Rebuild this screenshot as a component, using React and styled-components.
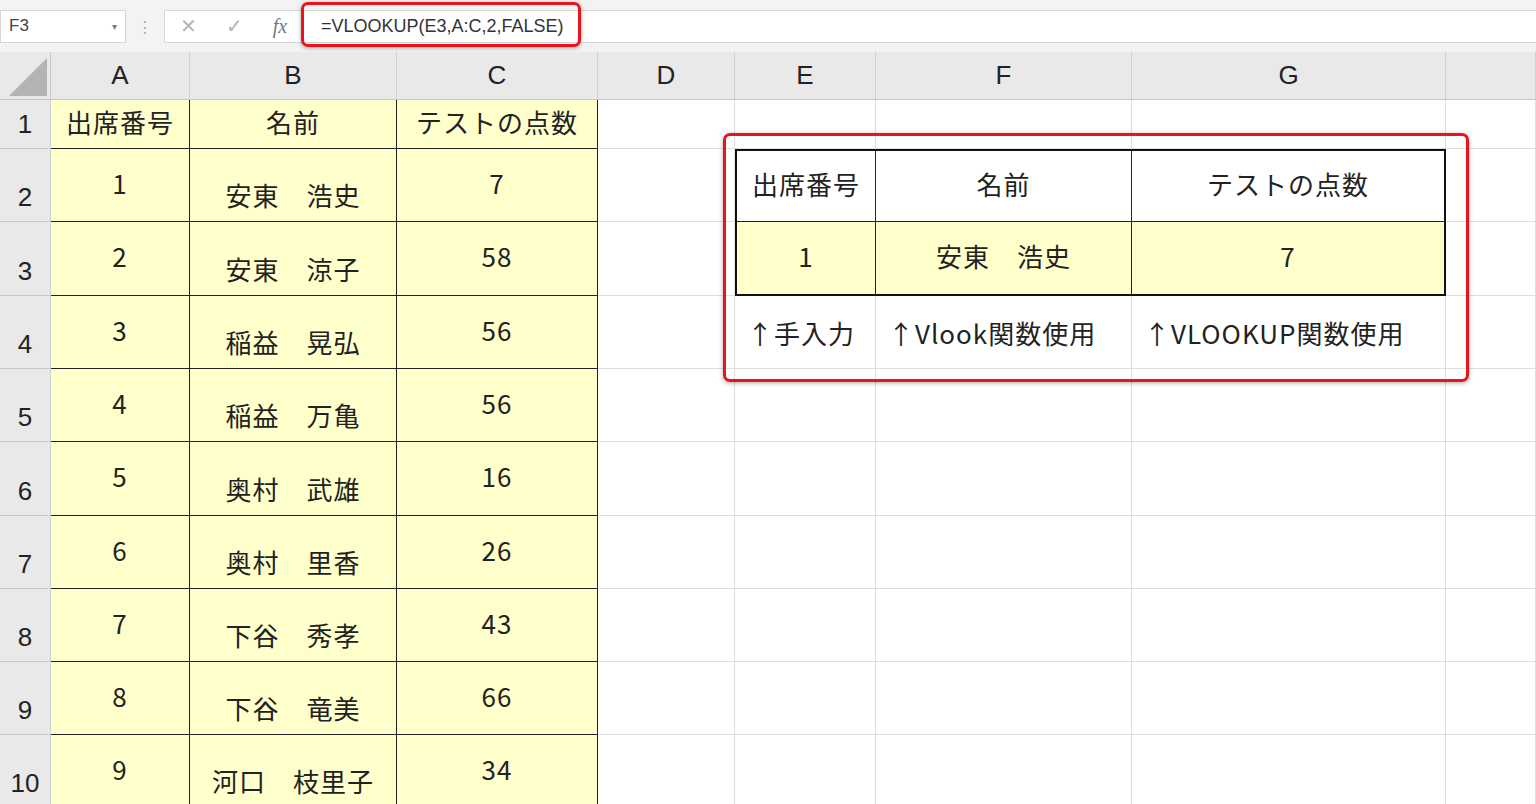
import React from "react";
import styled, { createGlobalStyle } from "styled-components";

const G = createGlobalStyle`
  body{margin:0;background:#fff;font-family:"Noto Sans CJK JP","Noto Sans",sans-serif;overflow:hidden;}
`;
const Page = styled.div`width:1536px;height:804px;position:relative;overflow:hidden;`;
const Bar = styled.div`height:52px;background:#f3f3f3;display:flex;align-items:center;gap:0;padding-top:0;box-sizing:border-box;`;
const NameBox = styled.div`width:126px;height:33px;margin-left:0;background:#fff;border:1px solid #d6d6d6;box-sizing:border-box;display:flex;align-items:center;justify-content:space-between;padding:0 8px;font:17px "Liberation Sans",sans-serif;color:#444;`;
const Dots = styled.div`width:38px;text-align:center;color:#aaa;font-size:16px;`;
const Formula = styled.div`flex:1;height:33px;background:#fff;border:1px solid #d6d6d6;border-right:none;display:flex;align-items:center;box-sizing:border-box;`;
const Btn = styled.div`width:46px;text-align:center;color:#b5b5b5;font:20px "Liberation Sans",sans-serif;`;
const Fx = styled.div`width:46px;text-align:center;color:#777;font:italic 20px "Liberation Serif",serif;`;
const FText = styled.div`padding-left:18px;font:18px "Liberation Sans",sans-serif;color:#333;`;
const Grid = styled.div`display:grid;grid-template-columns:51px 139px 207px 201px 137px 141px 256px 314px 90px;grid-template-rows:48px 49px 73px 74px 73px 73px 74px 73px 73px 73px 73px;`;
const Head = styled.div`background:#e9e9e9;border-right:1px solid #d0d0d0;border-bottom:1px solid #c8c8c8;display:flex;align-items:center;justify-content:center;font:26px "Liberation Sans",sans-serif;color:#222;`;
const RowHead = styled(Head)`align-items:${p=>p.$top?"center":"flex-end"};padding-bottom:${p=>p.$top?0:8}px;box-sizing:border-box;`;
const Corner = styled.div`background:#e9e9e9;border-right:1px solid #c8c8c8;border-bottom:1px solid #c8c8c8;position:relative;overflow:hidden;
  &::after{content:"";position:absolute;right:3px;bottom:3px;border-left:38px solid transparent;border-bottom:38px solid #b4b4b4;}`;
const Cell = styled.div`
  background:${p=>p.$y?"#ffffcc":"#fff"};
  border-right:${p=>p.$br||"1px solid #dedede"};
  border-bottom:${p=>p.$bb||"1px solid #dedede"};
  border-top:${p=>p.$bt||"none"};
  border-left:${p=>p.$bl||"none"};
  display:flex;justify-content:${p=>p.$left?"flex-start":"center"};
  align-items:${p=>p.$bottom?"flex-end":"center"};
  padding:${p=>p.$bottom?"0 0 8px":p.$left?"0 0 0 12px":"0 0 6px"};
  box-sizing:border-box;font-size:26px;color:#222;white-space:nowrap;letter-spacing:1px;font-weight:400;
`;
const RedBox = styled.div`position:absolute;border:3px solid #e8141c;border-radius:7px;box-shadow:0 1px 4px rgba(0,0,0,.35);pointer-events:none;`;

const data=[["1","安東　浩史","7"],["2","安東　涼子","58"],["3","稲益　晃弘","56"],["4","稲益　万亀","56"],["5","奥村　武雄","16"],["6","奥村　里香","26"],["7","下谷　秀孝","43"],["8","下谷　竜美","66"],["9","河口　枝里子","34"]];
const K="1px solid #222", K2="2px solid #111";

export default function App(){
  const cells=[];
  ["", "A","B","C","D","E","F","G",""].forEach((c,i)=>cells.push(i===0?<Corner key="c"/>:<Head key={"h"+i}>{c}</Head>));
  for(let r=1;r<=10;r++){
    cells.push(<RowHead key={"r"+r} $top={r===1}>{r}</RowHead>);
    const d=r===1?["出席番号","名前","テストの点数"]:data[r-2];
    d.forEach((v,j)=>cells.push(<Cell key={r+"a"+j} $y $br={K} $bb={K} $bottom={r>1&&j===1}>{v}</Cell>));
    cells.push(<Cell key={r+"d"}/>);
    if(r===2){["出席番号","名前","テストの点数"].forEach((v,j)=>cells.push(<Cell key={"e"+j} $bt={K2} $bl={j===0?K2:"none"} $br={j===2?K2:K} $bb={K}>{v}</Cell>));}
    else if(r===3){["1","安東　浩史","7"].forEach((v,j)=>cells.push(<Cell key={"f"+j} $y $bl={j===0?K2:"none"} $br={j===2?K2:K} $bb={K2}>{v}</Cell>));}
    else if(r===4){["↑手入力","↑Vlook関数使用","↑VLOOKUP関数使用"].forEach((v,j)=>cells.push(<Cell key={"g"+j} $left>{v}</Cell>));}
    else [0,1,2].forEach(j=>cells.push(<Cell key={r+"x"+j}/>));
    cells.push(<Cell key={r+"h"}/>);
  }
  return <Page><G/>
    <Bar><NameBox>F3<span style={{fontSize:10,color:"#777"}}>▾</span></NameBox><Dots>⋮</Dots>
      <Formula><Btn>✕</Btn><Btn>✓</Btn><Fx>fx</Fx><FText>=VLOOKUP(E3,A:C,2,FALSE)</FText></Formula></Bar>
    <Grid>{cells}</Grid>
    <RedBox style={{left:301,top:2,width:274,height:39}}/>
    <RedBox style={{left:723,top:133,width:740,height:243}}/>
  </Page>;
}
